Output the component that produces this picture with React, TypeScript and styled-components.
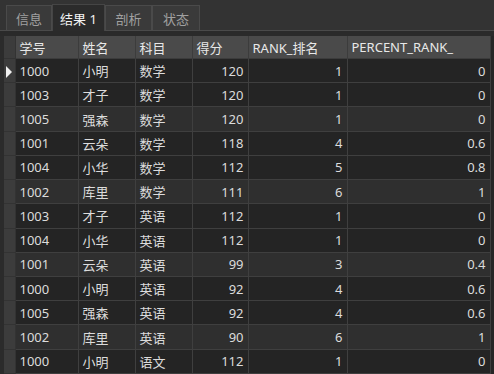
import { FC } from 'react';
import styled, { createGlobalStyle } from 'styled-components';

const GlobalStyle = createGlobalStyle`
  html, body {
    margin: 0;
    padding: 0;
    background: #2b2b2b;
  }
`;

const Root = styled.div`
  width: 494px;
  height: 374px;
  overflow: hidden;
  display: flex;
  flex-direction: column;
  background: #2b2b2b;
  font-family: 'Noto Sans', 'Noto Sans CJK SC', sans-serif;
  font-size: 13px;
  color: #dcdcdc;
`;

const TabBar = styled.div`
  height: 30px;
  display: flex;
  align-items: flex-end;
  padding-left: 6px;
  background: #333333;
  border-bottom: 1px solid #4a4a4a;
`;

const Tab = styled.div<{ $active?: boolean; $w: number }>`
  box-sizing: border-box;
  width: ${(p) => p.$w}px;
  height: ${(p) => (p.$active ? '27px' : '25px')};
  margin-bottom: ${(p) => (p.$active ? '-1px' : '0')};
  display: flex;
  align-items: center;
  justify-content: center;
  background: ${(p) => (p.$active ? '#2b2b2b' : '#3a3a3a')};
  border: 1px solid ${(p) => (p.$active ? '#454545' : '#4a4a4a')};
  border-bottom: none;
  color: ${(p) => (p.$active ? '#f2f2f2' : '#a0a0a0')};
  font-size: 13px;
  white-space: nowrap;
`;

const Strip = styled.div`
  height: 5px;
  background: #2a2a2a;
`;

const GridWrap = styled.div`
  display: flex;
  flex: 1;
  padding-left: 4px;
  background: #2b2b2b;
`;

const Table = styled.table`
  border-collapse: collapse;
  table-layout: fixed;
  width: 486px;
`;

const HeadCell = styled.th`
  height: 22px;
  padding: 0 4px;
  background: #4a4a4a;
  color: #e8e8e8;
  font-weight: normal;
  text-align: left;
  border-right: 1px solid #3c3c3c;
  border-bottom: 1px solid #3c3c3c;
  white-space: nowrap;
  overflow: hidden;
`;

const Indicator = styled.td`
  padding: 0;
  background: #3c3c3c;
  border-right: 1px solid #333333;
  border-bottom: 1px solid #333333;
  text-align: center;
`;

const Cell = styled.td<{ $num?: boolean; $shade?: boolean }>`
  height: 23px;
  padding: 0 4px;
  text-align: ${(p) => (p.$num ? 'right' : 'left')};
  background: ${(p) => (p.$shade ? '#2f2f2f' : '#242424')};
  border-right: 1px solid #3f3f3f;
  border-bottom: 1px solid #3f3f3f;
  white-space: nowrap;
  overflow: hidden;
`;

const RightEdge = styled.div`
  flex: 1;
  background: #262626;
`;

const Arrow = styled.span`
  display: inline-block;
  width: 0;
  height: 0;
  border-top: 6px solid transparent;
  border-bottom: 6px solid transparent;
  border-left: 6px solid #f0f0f0;
  vertical-align: middle;
`;

const rows: [string, string, string, number, number, number][] = [
  ['1000', '小明', '数学', 120, 1, 0],
  ['1003', '才子', '数学', 120, 1, 0],
  ['1005', '强森', '数学', 120, 1, 0],
  ['1001', '云朵', '数学', 118, 4, 0.6],
  ['1004', '小华', '数学', 112, 5, 0.8],
  ['1002', '库里', '数学', 111, 6, 1],
  ['1003', '才子', '英语', 112, 1, 0],
  ['1004', '小华', '英语', 112, 1, 0],
  ['1001', '云朵', '英语', 99, 3, 0.4],
  ['1000', '小明', '英语', 92, 4, 0.6],
  ['1005', '强森', '英语', 92, 4, 0.6],
  ['1002', '库里', '英语', 90, 6, 1],
  ['1000', '小明', '语文', 112, 1, 0],
];

const tabs = [
  { label: '信息', w: 46 },
  { label: '结果 1', w: 53, active: true },
  { label: '剖析', w: 47 },
  { label: '状态', w: 48 },
];

const columns = ['学号', '姓名', '科目', '得分', 'RANK_排名', 'PERCENT_RANK_'];
const widths = [11, 63, 57, 57, 56, 99, 143];

const App: FC = () => {
  return (
    <Root>
      <GlobalStyle />
      <TabBar>
        {tabs.map((t) => (
          <Tab key={t.label} $w={t.w} $active={t.active}>
            {t.label}
          </Tab>
        ))}
      </TabBar>
      <Strip />
      <GridWrap>
        <Table>
          <colgroup>
            {widths.map((w, i) => (
              <col key={i} style={{ width: w }} />
            ))}
          </colgroup>
          <thead>
            <tr>
              <Indicator as='th' />
              {columns.map((c) => (
                <HeadCell key={c}>{c}</HeadCell>
              ))}
            </tr>
          </thead>
          <tbody>
            {rows.map((r, i) => {
              const shade = i % 3 === 2;
              return (
                <tr key={i}>
                  <Indicator>{i === 0 && <Arrow />}</Indicator>
                  <Cell $shade={shade}>{r[0]}</Cell>
                  <Cell $shade={shade}>{r[1]}</Cell>
                  <Cell $shade={shade}>{r[2]}</Cell>
                  <Cell $shade={shade} $num>{r[3]}</Cell>
                  <Cell $shade={shade} $num>{r[4]}</Cell>
                  <Cell $shade={shade} $num>{r[5]}</Cell>
                </tr>
              );
            })}
          </tbody>
        </Table>
        <RightEdge />
      </GridWrap>
    </Root>
  );
};

export default App;
